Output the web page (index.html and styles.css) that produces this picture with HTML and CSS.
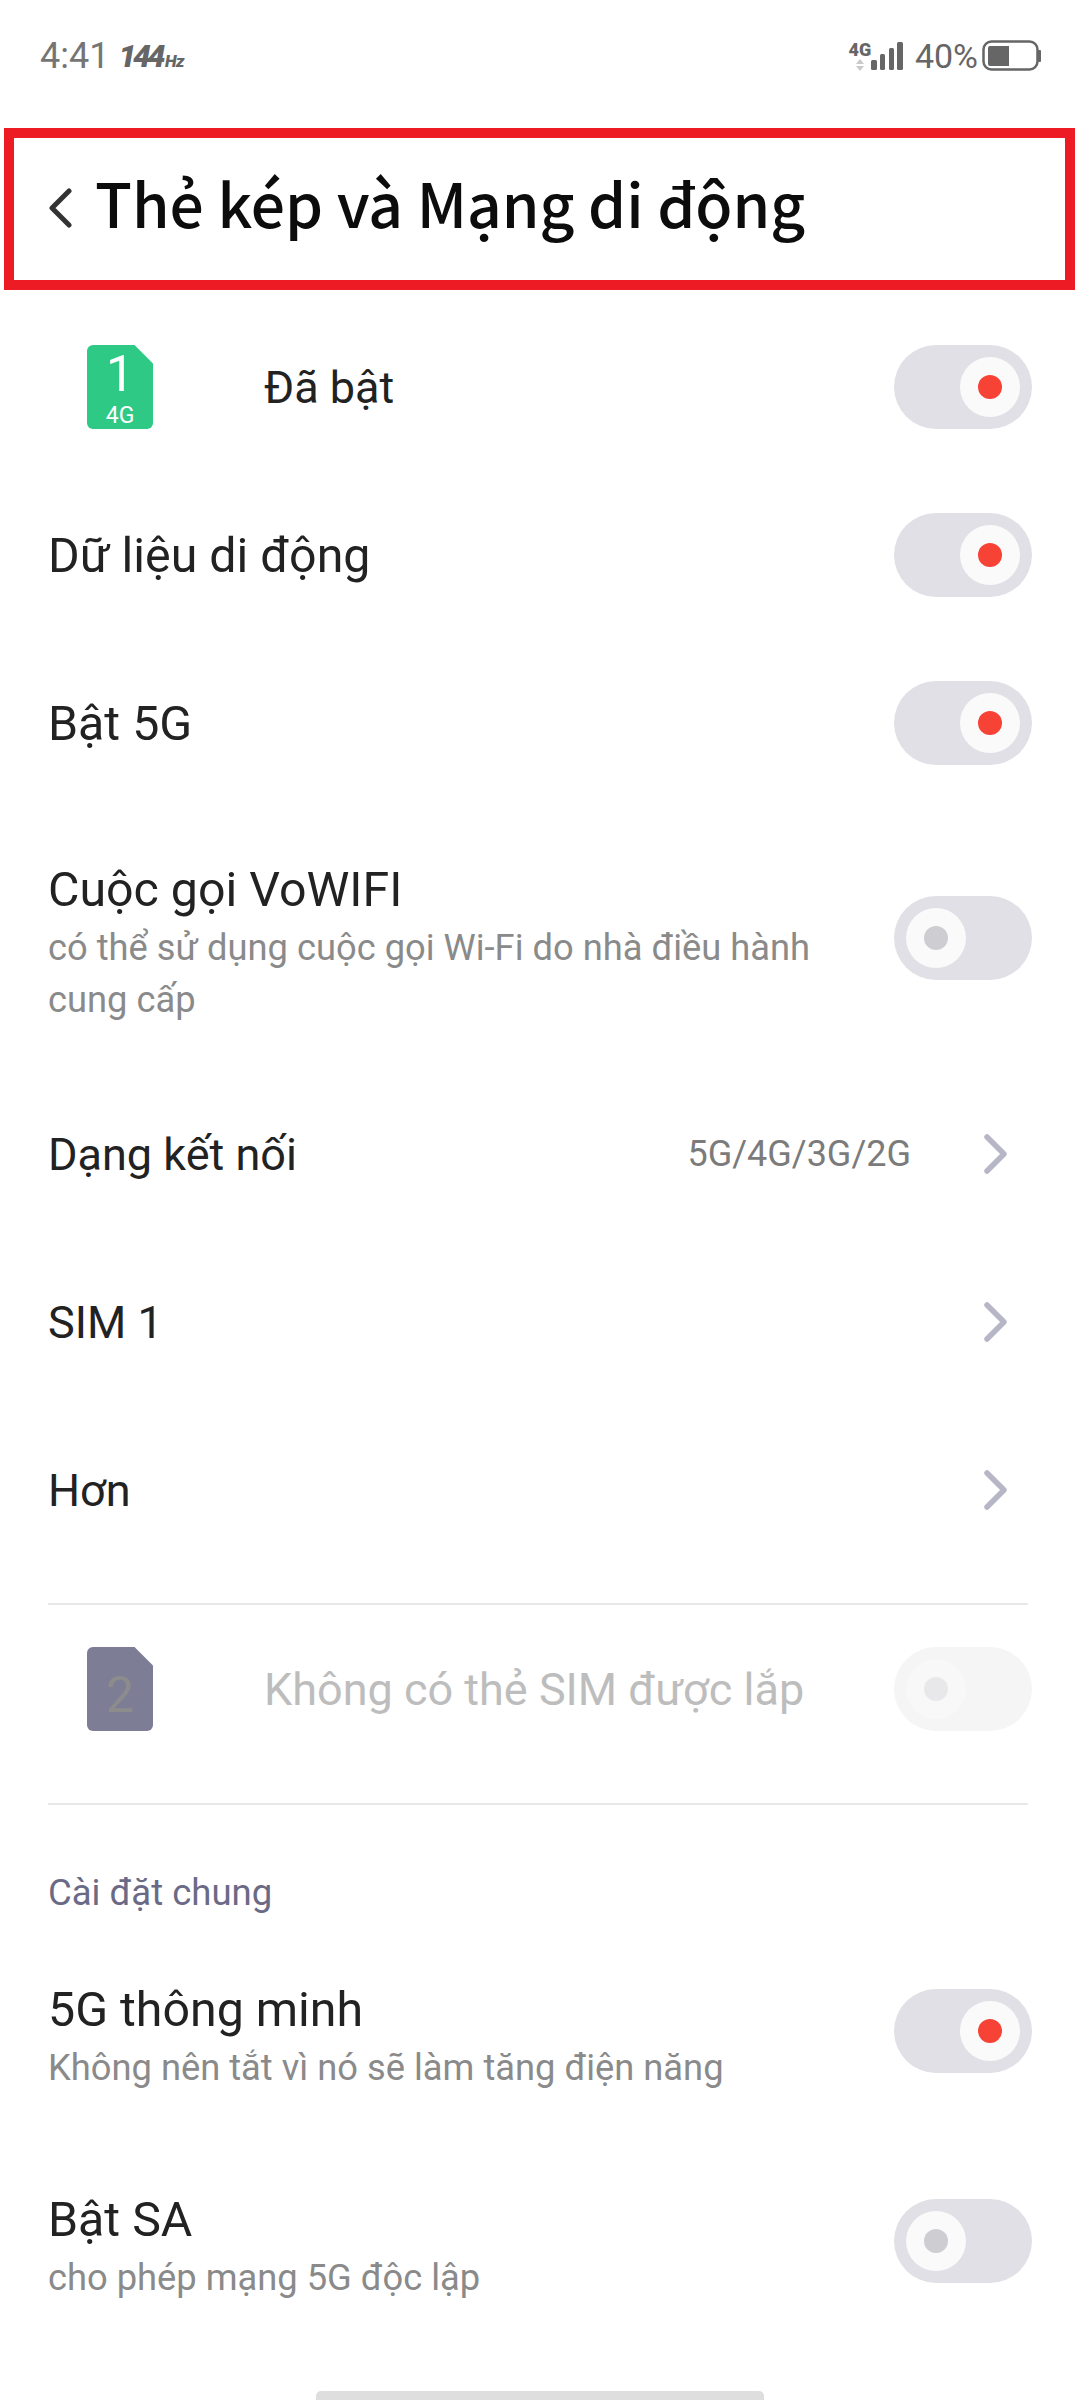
FILE: index.html
```html
<!DOCTYPE html>
<html lang="vi">
<head>
    <meta charset="UTF-8">
    <meta name="viewport" content="width=device-width, initial-scale=1.0">
    <title>Thẻ kép và Mạng di động</title>
    <link rel="stylesheet" href="styles.css">
</head>
<body>
    <div class="status-bar">
        <div class="status-left">
            <span class="clock">4:41</span>
            <span class="rate">144<small>Hz</small></span>
        </div>
        <div class="status-right">
            <span class="net">
                <span class="net-label">4G</span>
                <svg class="net-arrows" width="8" height="12" viewBox="0 0 8 12"><path d="M4 0 8 5H0zM0 7h8l-4 5z" fill="#c9c9c9"/></svg>
            </span>
            <svg class="signal" width="32" height="28" viewBox="0 0 32 28">
                <rect x="0" y="18" width="6" height="10" rx="1.5"/>
                <rect x="9" y="12" width="5" height="16" rx="1.5"/>
                <rect x="18" y="6" width="5" height="22" rx="1.5"/>
                <rect x="26" y="0" width="6" height="28" rx="1.5"/>
            </svg>
            <span class="battery-pct">40%</span>
            <svg class="battery" width="60" height="32" viewBox="0 0 60 32">
                <rect x="1.5" y="1.5" width="54" height="28" rx="8" fill="none" stroke="#666" stroke-width="2.5"/>
                <path d="M6 8a2 2 0 0 1 2-2h19v20H8a2 2 0 0 1-2-2z" fill="#666"/>
                <rect x="56" y="10" width="3" height="12" rx="1" fill="#666"/>
            </svg>
        </div>
    </div>

    <div class="title-bar">
        <svg class="back" width="24" height="40" viewBox="0 0 24 40"><path d="M21 3 4 20l17 17" fill="none" stroke="#333" stroke-width="5" stroke-linecap="round" stroke-linejoin="round"/></svg>
        <h1>Thẻ kép và Mạng di động</h1>
    </div>

    <div class="sim-row">
        <div class="sim sim-green"><span class="sim-num">1</span><span class="sim-net">4G</span></div>
        <span class="row-title">Đã bật</span>
        <span class="toggle on"></span>
    </div>
    <div class="row">
        <span class="row-title big">Dữ liệu di động</span>
        <span class="toggle on"></span>
    </div>
    <div class="row">
        <span class="row-title big">Bật 5G</span>
        <span class="toggle on"></span>
    </div>
    <div class="row row-tall">
        <div class="row-text">
            <div class="row-title big">Cuộc gọi VoWIFI</div>
            <div class="row-sub">có thể sử dụng cuộc gọi Wi-Fi do nhà điều hành cung cấp</div>
        </div>
        <span class="toggle"></span>
    </div>
    <div class="row">
        <span class="row-title">Dạng kết nối</span>
        <span class="row-value">5G/4G/3G/2G</span>
        <svg class="chevron" width="24" height="40" viewBox="0 0 24 40"><path d="M3 3l17 17L3 37" fill="none" stroke="#b7b6c6" stroke-width="5.5" stroke-linecap="round" stroke-linejoin="round"/></svg>
    </div>
    <div class="row">
        <span class="row-title">SIM 1</span>
        <svg class="chevron" width="24" height="40" viewBox="0 0 24 40"><path d="M3 3l17 17L3 37" fill="none" stroke="#b7b6c6" stroke-width="5.5" stroke-linecap="round" stroke-linejoin="round"/></svg>
    </div>
    <div class="row">
        <span class="row-title">Hơn</span>
        <svg class="chevron" width="24" height="40" viewBox="0 0 24 40"><path d="M3 3l17 17L3 37" fill="none" stroke="#b7b6c6" stroke-width="5.5" stroke-linecap="round" stroke-linejoin="round"/></svg>
    </div>

    <div class="divider divider-sim"></div>
    <div class="sim-row sim-row-off">
        <div class="sim sim-gray"><span class="sim-num">2</span></div>
        <span class="row-title">Không có thẻ SIM được lắp</span>
        <span class="toggle off"></span>
    </div>
    <div class="divider"></div>

    <div class="section-label">Cài đặt chung</div>
    <div class="row row-sub-one">
        <div class="row-text">
            <div class="row-title big">5G thông minh</div>
            <div class="row-sub">Không nên tắt vì nó sẽ làm tăng điện năng</div>
        </div>
        <span class="toggle on"></span>
    </div>
    <div class="row row-sub-one">
        <div class="row-text">
            <div class="row-title big">Bật SA</div>
            <div class="row-sub">cho phép mạng 5G độc lập</div>
        </div>
        <span class="toggle"></span>
    </div>

    <div class="home-bar"></div>
</body>
</html>
```

FILE: styles.css
```css
html, body {
    margin: 0;
    padding: 0;
}
body {
    position: relative;
    width: 1080px;
    height: 2400px;
    overflow: hidden;
    background-color: #fff;
    font-family: 'Roboto', 'Noto Sans', sans-serif;
    color: #222;
}
.status-bar {
    height: 128px;
    box-sizing: border-box;
    padding: 0 38px 16px 40px;
    display: flex;
    align-items: center;
    justify-content: space-between;
    color: #666;
}
.status-left,
.status-right {
    display: flex;
    align-items: center;
}
.clock {
    font-size: 36px;
    color: #757575;
}
.rate {
    margin-left: 9px;
    font-size: 32px;
    font-weight: 900;
    font-style: italic;
    letter-spacing: -3.5px;
    color: #666;
}
.rate small {
    margin-left: 3px;
    font-size: 17px;
    letter-spacing: -0.5px;
}
.net {
    position: relative;
    width: 24px;
    height: 30px;
    display: flex;
    flex-direction: column;
    align-items: center;
    margin-right: -1px;
}
.net-label {
    font-size: 18px;
    line-height: 17px;
    font-weight: 900;
}
.net-arrows {
    margin-top: 1px;
}
.signal {
    fill: #666;
    margin-right: 12px;
}
.battery-pct {
    font-size: 34px;
    margin-right: 4px;
}
.title-bar {
    height: 162px;
    box-sizing: border-box;
    margin: 0 5px 0 4px;
    border: 10px solid #ed1c24;
    padding: 0 0 16px 34px;
    display: flex;
    align-items: center;
}
.back {
    margin: 14px 23px 0 0;
}
h1 {
    margin: 0;
    font-family: 'Noto Sans CJK SC', 'Noto Sans', sans-serif;
    font-size: 60.5px;
    font-weight: 500;
    color: #0c0c0c;
}
.row,
.sim-row {
    height: 168px;
    box-sizing: border-box;
    padding: 0 48px;
    display: flex;
    align-items: center;
}
.sim-row {
    padding-left: 87px;
}
.sim-row .row-title {
    margin-left: 111px;
}
.title-bar + .sim-row {
    margin-top: 13px;
}
.row-title {
    font-size: 45px;
    color: #222;
}
.row-title.big {
    font-size: 48.3px;
}
.row-text {
    flex: 1;
    min-width: 0;
}
.row-tall {
    height: 263px;
    padding-bottom: 2px;
}
.row-tall .row-text {
    max-width: 780px;
    margin-top: 12px;
}
.row-sub-one {
    height: 210px;
}
.row-sub-one .row-text {
    margin-top: 12px;
}
.row-sub {
    margin-top: 4px;
    font-size: 36.3px;
    line-height: 52px;
    color: #8a8a8a;
}
.row-value {
    margin-left: auto;
    margin-right: 73px;
    font-size: 36px;
    color: #7b7b7b;
}
.row-title + .chevron {
    margin-left: auto;
}
.chevron {
    margin-right: 24px;
}
.toggle {
    position: relative;
    width: 138px;
    height: 84px;
    margin-left: auto;
    flex-shrink: 0;
    border-radius: 42px;
    background-color: #e1e0e6;
}
.toggle::before {
    content: '';
    position: absolute;
    top: 12px;
    left: 12px;
    width: 60px;
    height: 60px;
    border-radius: 50%;
    background-color: #fafafa;
}
.toggle::after {
    content: '';
    position: absolute;
    top: 30px;
    left: 30px;
    width: 24px;
    height: 24px;
    border-radius: 50%;
    background-color: #cdcdd2;
}
.toggle.on::before {
    left: 66px;
}
.toggle.on::after {
    left: 84px;
    background-color: #f74236;
}
.toggle.off {
    background-color: #f5f5f5;
}
.toggle.off::before {
    background-color: #f8f8f8;
}
.toggle.off::after {
    background-color: #e8e8ea;
}
.sim {
    width: 66px;
    height: 84px;
    flex-shrink: 0;
    display: flex;
    flex-direction: column;
    align-items: center;
    color: #fff;
    border-radius: 6px;
    clip-path: polygon(0 0, 72% 0, 100% 22%, 100% 100%, 0 100%);
}
.sim-green {
    background-color: #2ec985;
}
.sim-gray {
    background-color: #7e7d96;
    color: #8c8c8c;
    justify-content: center;
}
.sim-num {
    font-size: 50px;
    line-height: 58px;
}
.sim-gray .sim-num {
    margin-top: 12px;
}
.sim-net {
    font-size: 23px;
    line-height: 26px;
}
.divider {
    height: 2px;
    margin: 0 52px 0 48px;
    background-color: #e8e8e8;
}
.divider-sim {
    margin-top: 29px;
}
.sim-row-off {
    height: 198px;
    padding-bottom: 30px;
}
.sim-row-off .row-title {
    color: #bdbdbd;
}
.section-label {
    margin: 63px 48px 8px;
    font-size: 36.5px;
    line-height: 50px;
    color: #6b6a86;
}
.home-bar {
    position: absolute;
    left: 316px;
    bottom: 0;
    width: 448px;
    height: 9px;
    border-radius: 5px 5px 0 0;
    background-color: #dedede;
}
```
